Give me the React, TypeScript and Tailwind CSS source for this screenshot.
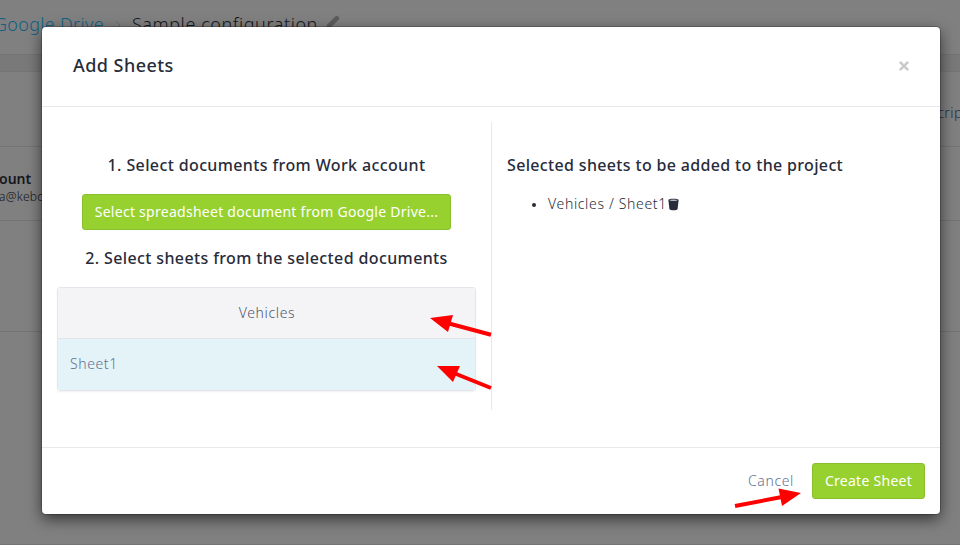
import React from "react";

function Arrow({ line, head }: { line: [number, number, number, number]; head: string }) {
  return (
    <g>
      <line x1={line[0]} y1={line[1]} x2={line[2]} y2={line[3]} stroke="#ff0000" strokeWidth="4" />
      <polygon points={head} fill="#ff0000" />
    </g>
  );
}

function TrashIcon() {
  return (
    <svg width="11" height="13" viewBox="0 0 11 13" className="ml-px shrink-0">
      <path d="M0.4 2 C0.4 0.3 10.6 0.3 10.6 2 L9.6 11 C9.2 12.8 1.8 12.8 1.4 11 Z" fill="#282c3a" />
      <ellipse cx="5.5" cy="2.3" rx="3.9" ry="0.8" fill="#b4b6bc" />
    </svg>
  );
}

function PageBehind() {
  return (
    <div className="flex h-[545px] flex-col bg-[#797979]">
      <header className="flex h-[55px] shrink-0 items-start border-b border-[#747474] bg-[#808080] pt-[11px] text-[18px] leading-[26px] whitespace-nowrap">
        <span className="-ml-[6px] font-light tracking-[0.3px] text-[#125f82]">Google Drive</span>
        <svg width="6" height="10" viewBox="0 0 6 10" className="mt-[9px] ml-[11px] shrink-0">
          <path d="M1 1 L5 5 L1 9" fill="none" stroke="#6a6a6a" strokeWidth="1" />
        </svg>
        <span className="ml-[11px] font-light tracking-[0.58px] text-[#16181d]">Sample configuration</span>
        <svg width="15" height="15" viewBox="0 0 15 15" className="mt-[4px] ml-[7px] shrink-0">
          <path d="M0.8 14.2 L2 9.8 L10.6 1.2 Q11.7 0.2 12.8 1.2 L13.8 2.2 Q14.8 3.3 13.8 4.4 L5.2 13 Z" fill="#5c5c5c" />
        </svg>
      </header>
      <section className="mt-4 flex h-[75px] shrink-0 items-start justify-end border-t border-[#747474] bg-[#808080] pt-[31px]">
        <span className="-mr-3 text-[14px] leading-5 font-light tracking-[0.5px] text-[#20304f]">Descripti</span>
      </section>
      <section className="h-[74px] shrink-0 border-t border-[#747474] bg-[#808080] pt-[22px]">
        <div className="flex text-[14px] leading-5 font-semibold text-[#15171d]">
          <span className="-ml-px">ount</span>
          <span className="ml-3 font-normal">m</span>
        </div>
        <div className="-ml-px text-[12px] leading-4 font-light tracking-[0.3px] text-[#15171d]">a@keboo</div>
      </section>
      <section className="h-[111px] shrink-0 border-t border-[#747474] bg-[#808080]" />
      <section className="flex-1 border-y border-[#747474] bg-[#808080]" />
    </div>
  );
}

export default function App() {
  return (
    <div className="relative h-[545px] w-[960px] overflow-hidden font-['Noto_Sans','Open_Sans',sans-serif] text-[#282c3a]">
      <PageBehind />

      <div
        role="dialog"
        className="absolute top-[27px] left-[42px] flex h-[487px] w-[898px] flex-col rounded bg-white shadow-[0_0_0_1px_rgba(0,0,0,0.2),0_5px_15px_rgba(0,0,0,0.6)]"
      >
        <div className="flex h-20 shrink-0 items-start justify-between border-b border-[#e7e8ea] pr-[31px] pl-[31px]">
          <h4 className="mt-[26px] text-[18px] leading-6 font-medium tracking-[0.45px]">Add Sheets</h4>
          <button aria-label="Close" className="mt-[34px]">
            <svg width="10" height="10" viewBox="0 0 10 10">
              <path d="M1.6 1.6 L8.4 8.4 M8.4 1.6 L1.6 8.4" stroke="#cbcbcb" strokeWidth="2.7" strokeLinecap="round" />
            </svg>
          </button>
        </div>

        <div className="flex h-[340px] shrink-0 px-[15px] pt-[15px]">
          <div className="flex h-[288px] w-[435px] shrink-0 flex-col items-center border-r border-[#e7e8ea] pt-[33px] pr-[15px]">
            <h5 className="text-[16px] leading-5 font-medium tracking-[0.38px] whitespace-nowrap">1. Select documents from Work account</h5>
            <button className="mt-[19px] h-9 w-[369px] rounded-[3px] border border-[#88bf2b] bg-[#97d130] text-[14px] leading-5 tracking-[0.27px] whitespace-nowrap text-white">
              Select spreadsheet document from Google Drive...
            </button>
            <h5 className="mt-[18px] text-[16px] leading-5 font-medium tracking-[0.38px] whitespace-nowrap">2. Select sheets from the selected documents</h5>
            <div className="mt-[19px] w-full overflow-hidden rounded-[3px] border border-[#e5e6eb] text-[14px] font-light shadow-[0_1px_2px_rgba(0,0,0,0.06)]">
              <div className="flex h-[50px] items-center justify-center bg-[#f4f4f7] pb-px pl-px tracking-[0.65px] text-[#4f566b]">Vehicles</div>
              <div className="flex h-[52px] items-center border-t border-[#e3e4ea] bg-[#e3f3f7] pb-0.5 pl-3 tracking-[0.6px] text-[#5f7191]">Sheet1</div>
            </div>
          </div>
          <div className="flex-1 pt-[33px] pl-[15px]">
            <h5 className="text-[16px] leading-5 font-medium tracking-[0.34px] whitespace-nowrap">Selected sheets to be added to the project</h5>
            <ul className="mt-[19px]">
              <li className="flex items-center pl-[25px] text-[14px] leading-5 font-light">
                <span className="mt-0.5 mr-3 size-1 rounded-full bg-[#282c3a]" />
                <span className="tracking-[0.65px] whitespace-nowrap">Vehicles / Sheet1</span>
                <TrashIcon />
              </li>
            </ul>
          </div>
        </div>

        <div className="flex flex-1 items-start justify-end border-t border-[#e7e8ea] pt-[15px] pr-[15px] text-[14px] leading-5">
          <button className="mr-[18px] h-9 font-light tracking-[0.65px] text-[#5f7191]">Cancel</button>
          <button className="h-9 w-[113px] rounded-[3px] border border-[#88bf2b] bg-[#97d130] tracking-[0.27px] text-white">Create Sheet</button>
        </div>
      </div>

      <svg width="960" height="545" viewBox="0 0 960 545" className="pointer-events-none absolute inset-0">
        <Arrow line={[491, 334.8, 449, 323.5]} head="430,318 453,315 448,332" />
        <Arrow line={[491, 388, 455, 373.5]} head="437,366 460,366 453,382" />
        <Arrow line={[735, 506, 782, 497]} head="801,493 778.5,488.5 782,506" />
      </svg>
    </div>
  );
}
